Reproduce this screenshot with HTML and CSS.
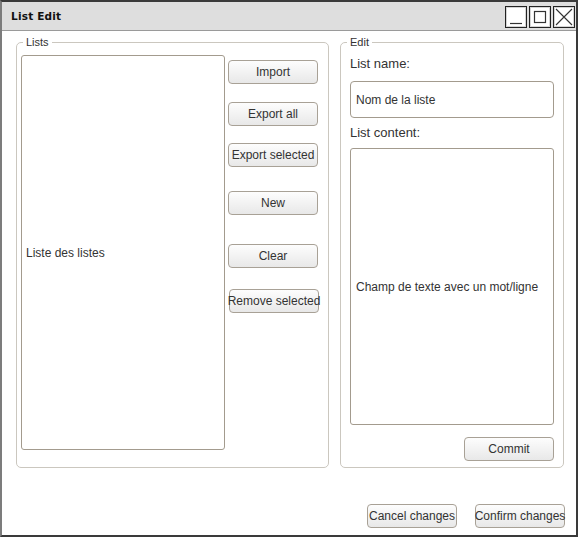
FILE: index.html
```html
<!DOCTYPE html>
<html>
<head>
<meta charset="utf-8">
<link rel="stylesheet" href="styles.css">
</head>
<body>
<div class="window">
  <div class="titlebar">
    <span class="title">List Edit</span>
    <div class="winbtns">
      <span class="winbtn"><svg width="20" height="20" viewBox="0 0 20 20"><line x1="4" y1="16.5" x2="16" y2="16.5" stroke="#333" stroke-width="1.2"/></svg></span>
      <span class="winbtn"><svg width="20" height="20" viewBox="0 0 20 20"><rect x="4.5" y="4.5" width="11" height="11" fill="none" stroke="#333" stroke-width="1.2"/></svg></span>
      <span class="winbtn"><svg width="20" height="20" viewBox="0 0 20 20"><path d="M2 2 L18 18 M18 2 L2 18" stroke="#333" stroke-width="1.1" fill="none"/></svg></span>
    </div>
  </div>
  <div class="content">
    <div class="groups">
      <div class="group group-lists">
        <span class="legend">Lists</span>
        <div class="listbox">Liste des listes</div>
        <div class="btncol">
          <button class="btn b-import">Import</button>
          <button class="btn b-exportall">Export all</button>
          <button class="btn b-exportsel">Export selected</button>
          <button class="btn b-new">New</button>
          <button class="btn b-clear">Clear</button>
          <button class="btn b-remove">Remove selected</button>
        </div>
      </div>
      <div class="group group-edit">
        <span class="legend">Edit</span>
        <div class="label">List name:</div>
        <div class="textbox">Nom de la liste</div>
        <div class="label label-content">List content:</div>
        <div class="textarea">Champ de texte avec un mot/ligne</div>
        <button class="btn b-commit">Commit</button>
      </div>
    </div>
    <div class="footer">
      <button class="btn">Cancel changes</button>
      <button class="btn">Confirm changes</button>
    </div>
  </div>
</div>
</body>
</html>
```
FILE: styles.css
```css
html, body {
  margin: 0;
  padding: 0;
  background: #ffffff;
}
.window {
  width: 578px;
  height: 537px;
  box-sizing: border-box;
  border: 2px solid #3a3a3a;
  border-left-color: #7c7c7c;
  background: #fff;
  display: flex;
  flex-direction: column;
  font-family: "Liberation Sans", Arial, sans-serif;
  color: #333;
}
.titlebar {
  height: 28px;
  background: #dedede;
  border-bottom: 1px solid #9a9a9a;
  display: flex;
  align-items: center;
  justify-content: space-between;
  padding: 0 1px 0 9px;
  flex: none;
}
.title {
  font-family: "DejaVu Sans", sans-serif;
  font-weight: bold;
  font-size: 10.5px;
  color: #111;
  letter-spacing: 0.2px;
}
.winbtns {
  display: flex;
  gap: 2px;
  margin-top: 2px;
}
.winbtn {
  width: 20px;
  height: 20px;
  border: 1px solid #222;
  box-shadow: inset 0 0 0 1px #d4d4d4;
  background: #fff;
  display: block;
}
.winbtn svg {
  display: block;
}
.content {
  flex: 1;
  padding: 11px 12px 0 14px;
  display: flex;
  flex-direction: column;
}
.groups {
  display: flex;
  gap: 11px;
  height: 426px;
}
.group {
  position: relative;
  box-sizing: border-box;
  border: 1px solid #cbc7bf;
  border-radius: 5px;
  height: 426px;
}
.legend {
  position: absolute;
  top: -7px;
  left: 6px;
  background: #fff;
  padding: 0 3px;
  font-size: 11px;
  line-height: 13px;
  color: #333;
}
.group-lists {
  width: 313px;
  display: flex;
  padding: 12px 0 0 4px;
  gap: 3px;
}
.listbox {
  width: 204px;
  height: 395px;
  box-sizing: border-box;
  border: 1px solid #a39b8e;
  border-radius: 3px;
  display: flex;
  align-items: center;
  padding-left: 4px;
  font-size: 12px;
}
.btncol {
  display: flex;
  flex-direction: column;
  align-items: flex-start;
}
.btn {
  width: 90px;
  height: 24px;
  box-sizing: border-box;
  border: 1px solid #a8a196;
  border-radius: 4px;
  background: linear-gradient(#fdfdfd, #e8e8e8);
  font-family: "Liberation Sans", Arial, sans-serif;
  font-size: 12px;
  color: #333;
  padding: 0;
  white-space: nowrap;
  display: flex;
  align-items: center;
  justify-content: center;
  overflow: visible;
}
.b-import { margin-top: 5px; }
.b-exportall { margin-top: 18px; }
.b-exportsel { margin-top: 17px; }
.b-new { margin-top: 24px; }
.b-clear { margin-top: 29px; }
.b-remove { margin-top: 21px; margin-left: 1px; }
.group-edit {
  width: 224px;
  display: flex;
  flex-direction: column;
  padding: 12px 0 0 9px;
}
.label {
  font-size: 13px;
  line-height: 18px;
  height: 18px;
}
.textbox {
  margin-top: 8px;
  width: 204px;
  height: 37px;
  box-sizing: border-box;
  border: 1px solid #a39b8e;
  border-radius: 4px;
  display: flex;
  align-items: center;
  padding-left: 5px;
  font-size: 12px;
}
.label-content {
  margin-top: 6px;
}
.textarea {
  margin-top: 6px;
  width: 204px;
  height: 277px;
  box-sizing: border-box;
  border: 1px solid #a39b8e;
  border-radius: 3px;
  display: flex;
  align-items: center;
  padding-left: 5px;
  font-size: 12px;
}
.b-commit {
  margin-top: 12px;
  margin-left: 114px;
}
.footer {
  display: flex;
  justify-content: flex-end;
  gap: 18px;
  margin-top: 36px;
  margin-right: -1px;
}
```
